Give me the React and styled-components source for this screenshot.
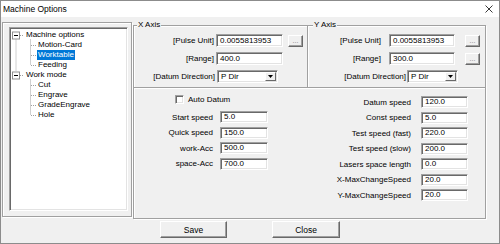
import React from 'react'
import styled, { createGlobalStyle } from 'styled-components'

const GlobalStyle = createGlobalStyle`
  html, body { margin: 0; padding: 0; background: #f0f0f0; }
  body { font-family: "Liberation Sans", Arial, sans-serif; font-size: 8px; color: #000; }
  * { box-sizing: border-box; }
`

const etched = `
  border: 1px solid #a0a0a0;
  box-shadow: inset 1px 1px 0 #fff, 1px 1px 0 #fff;
`

const Window = styled.div`
  width: 500px;
  height: 244px;
  background: #f0f0f0;
  border: 1px solid #8c8c8c;
  display: flex;
  flex-direction: column;
  overflow: hidden;
`

const TitleBar = styled.div`
  height: 16px;
  background: #fff;
  display: flex;
  align-items: center;
  justify-content: space-between;
  padding: 0 6px 0 2px;
  font-size: 8.5px;
  color: #000;
`

const Content = styled.div`
  height: 203px;
  display: flex;
`

const TreeGroup = styled.div`
  ${etched}
  margin: 5px 0 0 1px;
  width: 130px;
  height: 195px;
  padding: 4px 0 0 6px;
`

const TreeBox = styled.div`
  position: relative;
  width: 119px;
  height: 184px;
  background: #fff;
  border: 1px solid;
  border-color: #a0a0a0 #fff #fff #a0a0a0;
  box-shadow: inset 1px 1px 0 #696969, inset -1px -1px 0 #e3e3e3;
  padding: 2px 0 0 1px;
`

const TreeLines = styled.svg`
  position: absolute;
  left: 1px;
  top: 1px;
`

const TreeItem = styled.div`
  height: 10px;
  line-height: 10px;
  padding-left: ${p => (p.$child ? 26 : 14)}px;
  white-space: nowrap;
`

const ItemText = styled.span`
  display: inline-block;
  height: 10px;
  padding: 0 1px;
  background: ${p => (p.$selected ? '#0078d7' : 'transparent')};
  color: ${p => (p.$selected ? '#fff' : '#000')};
`

const RightFrame = styled.div`
  ${etched}
  margin: 8px 0 0 1px;
  width: 353px;
  height: 194px;
  display: flex;
  flex-direction: column;
`

const AxisRow = styled.div`
  height: 62px;
  display: flex;
  border-bottom: 1px solid #a0a0a0;
  box-shadow: 0 1px 0 #fff;
`

const AxisPanel = styled.div`
  position: relative;
  width: ${p => p.$w}px;
  padding-top: 8px;
  display: flex;
  flex-direction: column;
  gap: 5px;
  ${p => p.$divider && 'border-right: 1px solid #a0a0a0; box-shadow: 1px 0 0 #fff;'}
`

const Legend = styled.span`
  position: absolute;
  top: -6px;
  left: ${p => p.$x}px;
  padding: 0 1px;
  background: #f0f0f0;
  line-height: 10px;
`

const FieldRow = styled.div`
  display: flex;
  align-items: center;
  height: ${p => p.$h || 13}px;
`

const Label = styled.span`
  width: ${p => p.$w}px;
  margin-right: ${p => p.$gap}px;
  text-align: right;
  white-space: nowrap;
  flex-shrink: 0;
`

const TextBox = styled.div`
  width: ${p => p.$w}px;
  height: 100%;
  background: #fff;
  border: 1px solid;
  border-color: #a0a0a0 #fff #fff #a0a0a0;
  box-shadow: inset 1px 1px 0 #696969, inset -1px -1px 0 #e3e3e3;
  padding: 0 3px;
  line-height: 10px;
  display: flex;
  align-items: center;
  flex-shrink: 0;
`

const MiniButton = styled.div`
  width: 15px;
  height: 12px;
  margin-left: ${p => p.$gap}px;
  background: #f0f0f0;
  border: 1px solid;
  border-color: #fff #696969 #696969 #fff;
  box-shadow: inset -1px -1px 0 #a0a0a0;
  display: flex;
  align-items: center;
  justify-content: center;
  font-size: 7px;
  color: #777;
  line-height: 6px;
`

const Select = styled(TextBox)`
  justify-content: space-between;
  padding: 0 1px 0 3px;
`

const Arrow = styled.div`
  width: 11px;
  height: 9px;
  background: #f0f0f0;
  border: 1px solid;
  border-color: #fff #696969 #696969 #fff;
  display: flex;
  align-items: center;
  justify-content: center;
`

const Lower = styled.div`
  flex: 1;
  display: flex;
`

const Column = styled.div`
  width: ${p => p.$w}px;
  padding-top: ${p => p.$top}px;
  display: flex;
  flex-direction: column;
  gap: 3.5px;
`

const CheckRow = styled.div`
  display: flex;
  align-items: center;
  gap: 4px;
  height: 11px;
  padding-left: 41px;
  margin-bottom: 2.5px;
`

const CheckBox = styled.div`
  width: 9px;
  height: 9px;
  background: #fff;
  border: 1px solid;
  border-color: #a0a0a0 #fff #fff #a0a0a0;
  box-shadow: inset 1px 1px 0 #696969, inset -1px -1px 0 #e3e3e3;
`

const ButtonRow = styled.div`
  display: flex;
  gap: 45px;
  padding-left: 159px;
  margin-top: 1px;
`

const PushButton = styled.div`
  width: ${p => p.$w}px;
  height: 17px;
  background: #f0f0f0;
  border: 1px solid;
  border-color: #fff #696969 #696969 #fff;
  box-shadow: inset -1px -1px 0 #a0a0a0;
  display: flex;
  align-items: center;
  justify-content: center;
  font-size: 8.5px;
`

const treeItems = [
  { text: 'Machine options' },
  { text: 'Motion-Card', child: true },
  { text: 'Worktable', child: true, selected: true },
  { text: 'Feeding', child: true },
  { text: 'Work mode' },
  { text: 'Cut', child: true },
  { text: 'Engrave', child: true },
  { text: 'GradeEngrave', child: true },
  { text: 'Hole', child: true },
]

const leftFields = [
  ['Start speed', '5.0'],
  ['Quick speed', '150.0'],
  ['work-Acc', '500.0'],
  ['space-Acc', '700.0'],
]

const rightFields = [
  ['Datum speed', '120.0'],
  ['Const speed', '5.0'],
  ['Test speed (fast)', '220.0'],
  ['Test speed (slow)', '200.0'],
  ['Lasers space length', '0.0'],
  ['X-MaxChangeSpeed', '20.0'],
  ['Y-MaxChangeSpeed', '20.0'],
]

const cy = i => 6.5 + 10 * i

const Expander = ({ y }) => (
  <g>
    <rect x="1.5" y={y - 3.5} width="7" height="7" fill="#fff" stroke="#919191" />
    <line x1="3" y1={y} x2="7" y2={y} stroke="#000" />
  </g>
)

const TreeDrawing = () => (
  <TreeLines width="40" height="100">
    <g stroke="#a0a0a0" strokeDasharray="1 1" fill="none">
      <line x1="5" y1={cy(0) + 4} x2="5" y2={cy(4) - 4} />
      <line x1="9" y1={cy(0)} x2="12" y2={cy(0)} />
      <line x1="9" y1={cy(4)} x2="12" y2={cy(4)} />
      <line x1="19.5" y1={cy(0) + 4} x2="19.5" y2={cy(3)} />
      <line x1="19.5" y1={cy(4) + 4} x2="19.5" y2={cy(8)} />
      {[1, 2, 3, 5, 6, 7, 8].map(i => (
        <line key={i} x1="20" y1={cy(i)} x2="26" y2={cy(i)} />
      ))}
    </g>
    <Expander y={cy(0)} />
    <Expander y={cy(4)} />
  </TreeLines>
)

const DropArrow = () => (
  <Arrow>
    <svg width="5" height="3" viewBox="0 0 5 3">
      <path d="M0 0h5L2.5 3z" fill="#000" />
    </svg>
  </Arrow>
)

const AxisFields = ({ pulse, range, labelW, gap, inputW, btnGap, dirLabelW, dirGap, selectW }) => (
  <>
    <FieldRow>
      <Label $w={labelW} $gap={gap}>[Pulse Unit]</Label>
      <TextBox $w={inputW}>{pulse}</TextBox>
      <MiniButton $gap={btnGap}>...</MiniButton>
    </FieldRow>
    <FieldRow>
      <Label $w={labelW} $gap={gap}>[Range]</Label>
      <TextBox $w={inputW}>{range}</TextBox>
      {btnGap > 8 && <MiniButton $gap={btnGap}>...</MiniButton>}
    </FieldRow>
    <FieldRow>
      <Label $w={dirLabelW} $gap={dirGap}>[Datum Direction]</Label>
      <Select $w={selectW}>
        P Dir
        <DropArrow />
      </Select>
    </FieldRow>
  </>
)

export default function App() {
  return (
    <>
      <GlobalStyle />
      <Window>
        <TitleBar>
          <span>Machine Options</span>
          <svg width="8" height="8" viewBox="0 0 8 8">
            <path d="M0.5 0.5L7.5 7.5M7.5 0.5L0.5 7.5" stroke="#222" strokeWidth="0.9" />
          </svg>
        </TitleBar>
        <Content>
          <TreeGroup>
            <TreeBox>
              <TreeDrawing />
              {treeItems.map(item => (
                <TreeItem key={item.text} $child={item.child}>
                  <ItemText $selected={item.selected}>{item.text}</ItemText>
                </TreeItem>
              ))}
            </TreeBox>
          </TreeGroup>
          <RightFrame>
            <AxisRow>
              <AxisPanel $w={174} $divider>
                <Legend $x={3}>X Axis</Legend>
                <AxisFields
                  pulse="0.0055813953"
                  range="400.0"
                  labelW={80}
                  gap={2}
                  inputW={67}
                  btnGap={5}
                  dirLabelW={81}
                  dirGap={2}
                  selectW={61}
                />
              </AxisPanel>
              <AxisPanel $w={177}>
                <Legend $x={5}>Y Axis</Legend>
                <AxisFields
                  pulse="0.0055813953"
                  range="300.0"
                  labelW={73}
                  gap={8}
                  inputW={66}
                  btnGap={10}
                  dirLabelW={98}
                  dirGap={1}
                  selectW={51}
                />
              </AxisPanel>
            </AxisRow>
            <Lower>
              <Column $w={136} $top={6}>
                <CheckRow>
                  <CheckBox />
                  <span>Auto Datum</span>
                </CheckRow>
                {leftFields.map(([label, value]) => (
                  <FieldRow key={label} $h={12}>
                    <Label $w={79} $gap={7}>{label}</Label>
                    <TextBox $w={48}>{value}</TextBox>
                  </FieldRow>
                ))}
              </Column>
              <Column $w={210} $top={8}>
                {rightFields.map(([label, value]) => (
                  <FieldRow key={label} $h={12}>
                    <Label $w={141} $gap={10}>{label}</Label>
                    <TextBox $w={47}>{value}</TextBox>
                  </FieldRow>
                ))}
              </Column>
            </Lower>
          </RightFrame>
        </Content>
        <ButtonRow>
          <PushButton $w={67}>Save</PushButton>
          <PushButton $w={68}>Close</PushButton>
        </ButtonRow>
      </Window>
    </>
  )
}
